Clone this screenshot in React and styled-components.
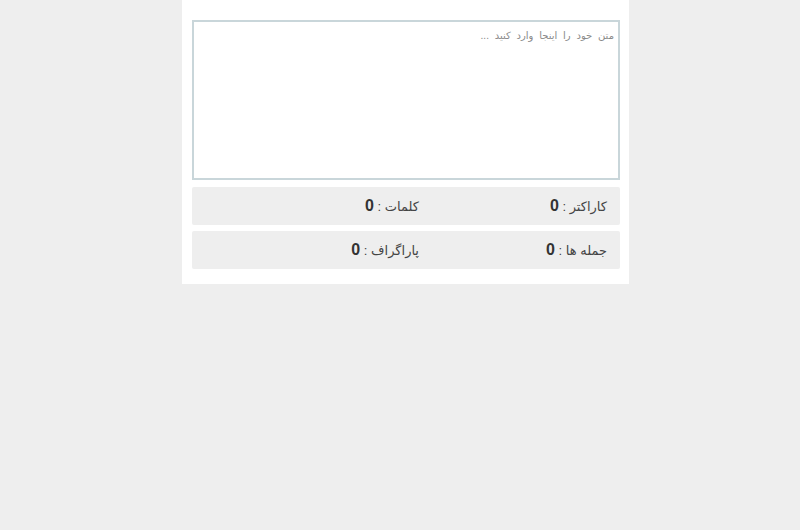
import React, { useState } from "react";
import styled, { createGlobalStyle } from "styled-components";

const GlobalStyle = createGlobalStyle`
  html, body {
    margin: 0;
    padding: 0;
    background: #eeeeee;
  }
  body {
    font-family: "Liberation Sans", "DejaVu Sans", Arial, sans-serif;
    color: #333;
  }
`;

const countStats = (text) => {
  const trimmed = text.trim();
  return {
    chars: text.length,
    words: trimmed ? trimmed.split(/\s+/).length : 0,
    sentences: trimmed ? trimmed.split(/[.!?؟]+/).filter((s) => s.trim()).length : 0,
    paragraphs: trimmed ? trimmed.split(/\n+/).filter((p) => p.trim()).length : 0,
  };
};

const App = () => {
  const [text, setText] = useState("");
  const stats = countStats(text);

  return (
    <>
      <GlobalStyle />
      <Card dir="rtl">
        <Editor
          value={text}
          onChange={(e) => setText(e.target.value)}
          placeholder="متن خود را اینجا وارد کنید ..."
        />
        <StatRow>
          <Stat>
            <Label>کاراکتر :</Label> <Value>{stats.chars}</Value>
          </Stat>
          <Stat>
            <Label>کلمات :</Label> <Value>{stats.words}</Value>
          </Stat>
        </StatRow>
        <StatRow>
          <Stat>
            <Label>جمله ها :</Label> <Value>{stats.sentences}</Value>
          </Stat>
          <Stat>
            <Label>پاراگراف :</Label> <Value>{stats.paragraphs}</Value>
          </Stat>
        </StatRow>
      </Card>
    </>
  );
};

export default App;

const Card = styled.div`
  width: 428px;
  margin-left: 182px;
  padding: 20px 9px 15px 10px;
  background: #ffffff;
  display: flex;
  flex-direction: column;
  gap: 6px;
`;

const Editor = styled.textarea`
  box-sizing: border-box;
  width: 100%;
  height: 160px;
  margin-bottom: 1px;
  padding: 8px 4px;
  border: 2px solid #c9d6da;
  border-radius: 0;
  resize: none;
  outline: none;
  font-family: "Liberation Sans", "DejaVu Sans", Arial, sans-serif;
  font-size: 10px;
  word-spacing: 3px;
  color: #333;
  background: #fff;

  &::placeholder {
    color: #8a8a8a;
  }
`;

const StatRow = styled.div`
  display: flex;
  height: 38px;
  align-items: center;
  padding-right: 13px;
  background: #eeeeee;
  border-radius: 2px;
`;

const Stat = styled.div`
  width: 188px;
  font-size: 13px;
  color: #444;
`;

const Label = styled.span`
  font-size: 13px;
`;

const Value = styled.b`
  font-size: 16px;
  color: #333;
`;
